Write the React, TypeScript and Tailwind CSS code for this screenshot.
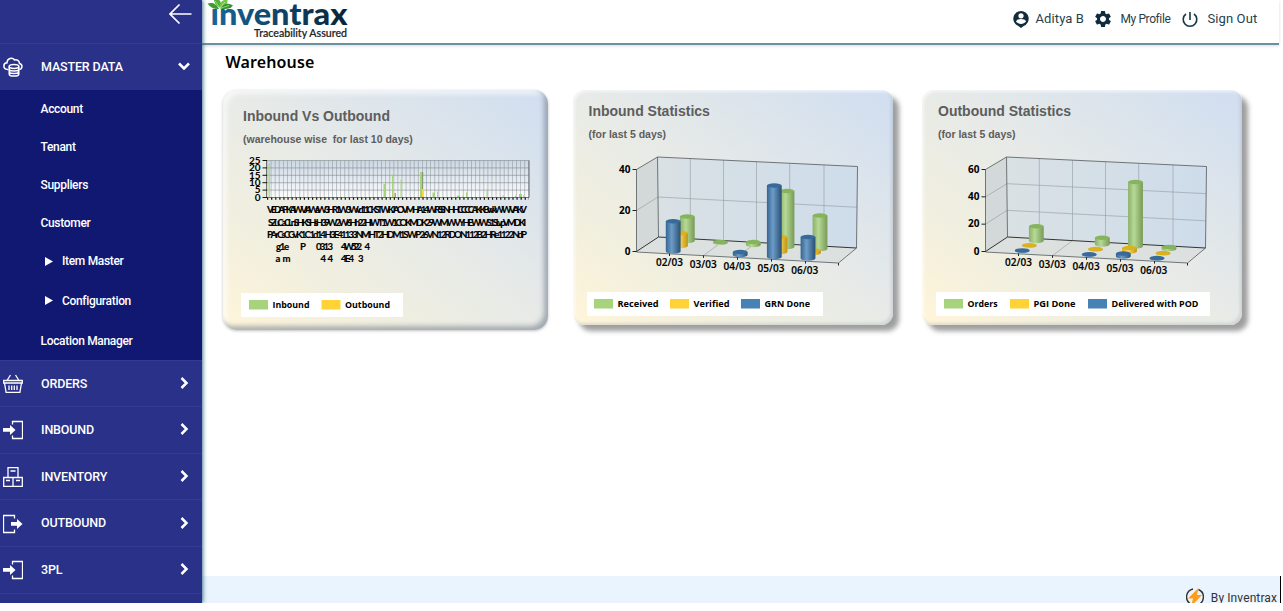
import React from "react";
import { MdSettings } from "react-icons/md";

const CHART_FONT = '"Open Sans", "Noto Sans", sans-serif';
const TICK_FONT = '"Lato", "Open Sans", sans-serif';

function BasketIcon() {
  return (
    <svg width="20" height="20" viewBox="0 0 20 20" fill="none" stroke="#fff" strokeWidth="1.3">
      <path d="M.7 6.500h18.600v2.500H.7zM1.500 9l1.600 9.300h13.800l1.600-9.300M4 6.500l3.500-5.500M16 6.500l-3.500-5.500M6 11.500v4.500M8.700 11.500v4.500M11.300 11.500v4.500M14 11.500v4.500" />
    </svg>
  );
}
function InIcon() {
  return (
    <svg width="20" height="20" viewBox="0 0 20 20" fill="none" stroke="#fff" strokeWidth="1.3">
      <path d="M9.500 4.500v-3h10v17h-10v-3" />
      <path d="M0 8h7V5l5.500 5L7 15v-3.200H0z" fill="#fff" stroke="none" />
    </svg>
  );
}
function OutIcon() {
  return (
    <svg width="20" height="20" viewBox="0 0 20 20" fill="none" stroke="#fff" strokeWidth="1.3">
      <path d="M11.500 4.500v-3h-11v17h11v-3" />
      <path d="M8 8h6V5l5.500 5L14 15v-3.200H8z" fill="#fff" stroke="none" />
    </svg>
  );
}
function BoxesIcon() {
  return (
    <svg width="20" height="20" viewBox="0 0 20 20" fill="none" stroke="#fff" strokeWidth="1.3">
      <path d="M.7 10.500h18.600v8.800H.7zM10 10.500v9M5 10.500v-9.800h10v9.800M7.500 4h5M3 13.500h4M13 13.500h4" />
    </svg>
  );
}
function CloudIcon() {
  return (
    <svg width="20" height="20" viewBox="0 0 20 20" fill="none" stroke="#fff" strokeWidth="1.5">
      <path d="M5.500 12.500H4.500C-.5 12 0 6 4 5.800 4 1 9.500 0 11.500 3c3-.8 5 1.200 5 3.500 3.500 1 3 5.500-.2 6" />
      <ellipse cx="11" cy="9.500" rx="4.800" ry="1.900" />
      <path d="M6.200 9.500V17c0 2.800 9.600 2.800 9.600 0V9.500M6.200 12c0 2.600 9.600 2.600 9.600 0M6.200 14.600c0 2.600 9.600 2.600 9.600 0" />
    </svg>
  );
}

function MenuRow({ icon, label, open }: { icon: React.ReactNode; label: string; open?: boolean }) {
  return (
    <div className="flex h-[46.600px] shrink-0 items-center border-t border-[#343b94] pl-[2.500px] pr-[10.500px] pt-px">
      <span className="w-[38.500px]">{icon}</span>
      <span className="flex-1 text-[12.500px] font-medium tracking-[-0.15px] text-white">{label}</span>
      <svg className="mb-[2px]" width="14" height="14" viewBox="0 0 14 14" fill="none" stroke="#fff" strokeWidth="2.500">
        <path d={open ? "M2 4.500l5 5 5-5" : "M4.500 2l5 5-5 5"} />
      </svg>
    </div>
  );
}

function SubItem({ label, arrow, tall }: { label: string; arrow?: boolean; tall?: boolean }) {
  return (
    <div className={`flex items-center text-[12px] font-medium tracking-[-0.32px] text-white ${tall ? "h-[40px] pt-[2.500px]" : "h-[38px] pt-px"} ${arrow ? "pl-[45px]" : "pl-[40.500px]"}`}>
      {arrow && (
        <svg className="mr-[9px]" width="8" height="9" viewBox="0 0 8 9">
          <path d="M0 0l8 4.500L0 9z" fill="#fff" />
        </svg>
      )}
      {label}
    </div>
  );
}

function Legend({ items, widths }: { items: [string, string, number, number][]; widths: number }) {
  return (
    <svg className="block" width={widths} height="24" fontFamily={CHART_FONT} fontSize="9.500" fontWeight="700">
      <rect width={widths} height="24" fill="#fff" />
      {items.map(([label, color, x, w]) => (
        <g key={label}>
          <rect x={x} y="7" width="19" height="9.500" fill={color} />
          <text x={x + 23.500} y="14.500" textLength={w} lengthAdjust="spacingAndGlyphs">{label}</text>
        </g>
      ))}
    </svg>
  );
}

const G = "#a6d37b";
const Y = "#ffd335";
const B = "#4682b4";

type Cyl = ["g" | "y" | "b", number, number, number];

const topColor = { g: "#86b45c", y: "#dbb11f", b: "#386b9b" };

function Cylinders({ items, id }: { items: Cyl[]; id: string }) {
  return (
    <>
      {items.map(([c, x, t, b], i) => {
        const rx = 7.4;
        return (
          <g key={i}>
            <path d={`M${x - rx} ${t}V${b}A${rx} 2.200 0 0 0 ${x + rx} ${b}V${t}z`} fill={`url(#${id}${c})`} />
            <ellipse cx={x} cy={t} rx={rx} ry="2.200" fill={topColor[c]} />
          </g>
        );
      })}
    </>
  );
}

function Chart3D({ id, ticks, bars }: { id: string; ticks: number[]; bars: Cyl[] }) {
  const n = ticks.length - 1;
  const grads: [string, string, string, string][] = [
    ["g", "#8bb168", "#b7d996", "#779a55"],
    ["y", "#d9ac20", "#ffdb58", "#bd9418"],
    ["b", "#34648f", "#6c9cc8", "#294f74"],
  ];
  return (
    <svg className="block" width="320" height="136" viewBox="573 147 320 136" fontFamily={CHART_FONT} fontSize="10" fontWeight="600">
      <defs>
        {grads.map(([k, a, b, c]) => (
          <linearGradient id={id + k} key={k}>
            <stop offset="0" stopColor={a} />
            <stop offset=".4" stopColor={b} />
            <stop offset="1" stopColor={c} />
          </linearGradient>
        ))}
        <linearGradient id={id + "w"}>
          <stop offset="0" stopColor="#d9e1e4" />
          <stop offset="1" stopColor="#cedceb" />
        </linearGradient>
      </defs>
      <path d="M636.500 169.500L657.500 157l1 80-22 14.500z" fill="#d3d9d9" />
      <path d="M657.500 157l200 9.500-1 81.500-198-11z" fill={`url(#${id}w)`} />
      <path d="M636.500 251.500l22-14.500 198 11-18 15z" fill="#dce1e0" />
      <g fill="none" stroke="#777f84" strokeWidth=".6" opacity=".7">
        {[690.3, 723.5, 756.5, 789.7, 824].map((x) => (
          <path key={x} d={`M${x} ${157 + (x - 657.5) * 0.0475}V${237 + (x - 658) * 0.055}`} />
        ))}
        <path d="M723.500 240.600l-20 15M756.500 242.500l-20 15" />
        {ticks.slice(1, -1).map((t, i) => {
          const f = (i + 1) / n;
          return <path key={t} d={`M636.500 ${251.5 - 82 * f}L658 ${237 - 80 * f}L857 ${248 - 81.500 * f}`} />;
        })}
      </g>
      <path d="M636.500 169.500L657.500 157l200 9.500-1 81.500-18 15-202-11zM657.500 157l1 80" fill="none" stroke="#62686b" strokeWidth=".9" />
      <path d="M636.500 251.500l22-14.500 198 11" fill="none" stroke="#333" strokeWidth="1" />
      <Cylinders items={bars} id={id} />
      {ticks.map((t, i) => {
        const y = 251.5 - (82 * i) / n;
        return (
          <g key={t}>
            <path d={`M632.500 ${y}h4`} stroke="#222" />
            <text x="630.500" y={y + 3.300} textAnchor="end" fontWeight="700">{t}</text>
          </g>
        );
      })}
      {["02/03", "03/03", "04/03", "05/03", "06/03"].map((d, i) => (
        <g key={d}>
          <path d={`M${669.5 + i * 34} ${253.500 + i * 1.900}v2.500`} stroke="#222" />
          <text x={656 + i * 33.800} y={266 + i * 1.950} textLength="27" stroke="#000" strokeWidth=".15">{d}</text>
        </g>
      ))}
      <path d="M838.500 263v2.500" stroke="#222" />
    </svg>
  );
}

const rows: [number, number, number, string][] = [
  [213, 267, 260, "VEDAPKAi WVJ4WaW3HR1W3Wvd11CKSTWKJAOVMHA14WRSSNHHCCCCAKKBvvkWWVAKV"],
  [225.5, 268, 258, "SZuCaCLnSHKSHsH39W2W6Hh22HIWT1W1COKMDK29WMWVYHEWWS1SLvpVMDKI"],
  [237.5, 267, 260, "PArCsCGvK1C 1d14 H3E41133NMHT2HDM1S WP26VN12RDON112B2HRe1122NdP"],
  [250, 276, 13, "g1e"],
  [250, 300, 5, "P"],
  [250, 316, 17, "0313"],
  [250, 341, 21, "4W522"],
  [250, 364.5, 5, "4"],
  [262, 275.5, 15, "a m"],
  [262, 320.5, 12.5, "4 4"],
  [262, 341, 13, "4E4"],
  [262, 358, 5, "3"],
];

const thinBars: [number, number, number, string][] = [
  [268.5, 1.2, 34, G], [383.5, 2.6, 13.5, G], [392, 1, 23, G], [392.8, 1.5, 5, Y], [394.5, 1.500, 4.5, "#94aa8f"],
  [400.5, 1, 18, G], [420, 2.7, 25.5, G], [422, 1.800, 8, Y], [432.5, 2.5, 5, G], [437, 1, 6, G],
  [457, 3, 2, G], [462.500, 1, 2, G], [466, 1, 5, G], [486.500, 1.2, 8, G], [502.500, 1.2, 2, G], [515, 1, 2, G], [519, 3, 3.5, G], [523, 1, 2, G],
];

function FlatChart() {
  return (
    <svg className="block" width="325" height="140" viewBox="223 149 325 140" fontFamily={TICK_FONT} fontSize="10" fontWeight="800">
      <defs>
        <linearGradient id="plot" x1="0" y1="0" x2="0" y2="1">
          <stop offset="0" stopColor="#cbd7e3" />
          <stop offset="1" stopColor="#fdfdfd" />
        </linearGradient>
      </defs>
      <rect x="267" y="160.500" width="262" height="37" fill="url(#plot)" />
      <g stroke="#7d8589" strokeWidth=".7">
        {Array.from({ length: 65 }, (_, i) => (
          <path key={i} d={`M${267 + i * 4.090} 160.500v37`} opacity=".65" />
        ))}
        {[0, 1, 2, 3, 4].map((i) => (
          <path key={i} d={`M267 ${160.500 + i * 7.400}h262`} opacity=".8" />
        ))}
      </g>
      {thinBars.map(([x, w, h, c]) => (
        <rect key={x} x={x} y={197.500 - h} width={w} height={h} fill={c} />
      ))}
      <path d="M422.700 172v17" stroke="#737c71" strokeWidth=".8" />
      <path d="M266.500 160.500v37h262.500M529 160.500v37" fill="none" stroke="#555" strokeWidth=".8" />
      <path d="M267 198.700h262" stroke="#111" strokeWidth="2.200" strokeDasharray="1.200 2.890" />
      {[25, 20, 15, 10, 5, 0].map((v, i) => (
        <g key={v}>
          <path d={`M262.500 ${160.500 + i * 7.400}h4.500`} stroke="#111" />
          <text x="260.500" y={163.800 + i * 7.400} textAnchor="end" fontWeight="700">{v}</text>
        </g>
      ))}
      {rows.map(([y, x, w, t], i) => (
        <text key={i} x={x} y={y} textLength={w} fontSize="9.600" fontWeight="700" stroke="#000" strokeWidth=".15">{t}</text>
      ))}
    </svg>
  );
}

function CardHead({ title, sub, wide }: { title: string; sub: string; wide: string }) {
  return (
    <div className={`whitespace-pre font-bold text-[#5d5d5d] ${wide}`}>
      <div className="h-[24px] text-[14px] leading-[20px]">{title}</div>
      <div className="text-[10.500px] leading-[18px]">{sub}</div>
    </div>
  );
}

const CARD =
  "flex flex-col h-[235px] w-[320px] rounded-[12px] bg-[linear-gradient(to_top_right,#fff5d9_0%,#f1efdf_25%,#e7eae7_52%,#d2dff0_96%)] shadow-[6px_6px_5px_rgba(0,0,0,0.38),inset_-2px_-2px_3px_rgba(110,125,140,0.2),inset_2px_2px_3px_rgba(255,255,255,0.6)]";

function Logo() {
  return (
    <svg className="block" width="150" height="43" viewBox="202 0 150 43">
      <defs>
        <linearGradient id="brand">
          <stop offset="0" stopColor="#17679a" />
          <stop offset=".3" stopColor="#10527c" />
          <stop offset="1" stopColor="#082437" />
        </linearGradient>
      </defs>
      <text x="210.500" y="25" fontFamily='"Lato", sans-serif' fontSize="31" fontWeight="900" textLength="137" lengthAdjust="spacingAndGlyphs" fill="url(#brand)">inventrax</text>
      <path d="M208 0h25v7h-25z" fill="#fff" />
      <path d="M219 9C216 3 212 2 207.500 3.500c3 4 7 6 11.500 5.500z" fill="#3d9b35" />
      <path d="M220 8c-5-3-6-6-6-9h4c3 2 4 5 2 9z" fill="#51af3b" />
      <path d="M220 8c-1-5 2-8 7-9 2 4-2 8-7 9z" fill="#73c845" />
      <path d="M220 8.500c3-5 8-6 13-3-3 4-8 4-13 3z" fill="#37952f" />
      <path d="M220 8l-5-7M220 8l5-6M220 8.300l9-2.800" stroke="#d3eeb5" strokeWidth=".6" />
      <text x="254" y="37" fontFamily='"Lato", sans-serif' fontSize="10.500" fontWeight="500" textLength="93" lengthAdjust="spacingAndGlyphs" fill="#222" stroke="#222" strokeWidth=".2">Traceability Assured</text>
    </svg>
  );
}

export default function App() {
  return (
    <div className="h-[611px] w-[1283px] overflow-hidden bg-white font-['Roboto',sans-serif]">
      <div className="flex h-[603px] overflow-hidden">
        <aside className="z-10 mr-[0.500px] flex w-[201.500px] shrink-0 flex-col overflow-hidden bg-[#293189] shadow-[1px_0_4px_rgba(50,105,130,0.9)]">
          <div className="flex h-[43px] shrink-0 justify-end pr-[10px] pt-[3px]">
            <svg width="23" height="22" viewBox="0 0 23 22" fill="none" stroke="#fff" strokeWidth="1.700">
              <path d="M22.500 11H1.500M10.500 1.500L1 11l9.500 9.500" />
            </svg>
          </div>
          <MenuRow icon={<CloudIcon />} label="MASTER DATA" open />
          <div className="h-[270px] shrink-0 bg-[#101872]">
            <SubItem label="Account" />
            <SubItem label="Tenant" />
            <SubItem label="Suppliers" />
            <SubItem label="Customer" />
            <SubItem label="Item Master" arrow />
            <SubItem label="Configuration" arrow tall />
            <SubItem label="Location Manager" tall />
          </div>
          <MenuRow icon={<BasketIcon />} label="ORDERS" />
          <MenuRow icon={<InIcon />} label="INBOUND" />
          <MenuRow icon={<BoxesIcon />} label="INVENTORY" />
          <MenuRow icon={<OutIcon />} label="OUTBOUND" />
          <MenuRow icon={<InIcon />} label="3PL" />
          <div className="h-[12px] shrink-0 border-t border-[#343b94]" />
        </aside>

        <div className="flex w-[1081px] flex-col">
          <header className="flex h-[45px] w-[1077px] shrink-0 items-start justify-between border-b-2 border-[#6b919f] shadow-[0_1px_3px_rgba(0,0,0,0.15)]">
            <Logo />
            <div className="flex h-[38px] items-center pr-[21.500px] text-[#263f4d]">
              <svg width="16" height="17" viewBox="0 0 16 17">
                <path d="M8 0a7.700 7.700 0 0 1 2.700 14.900L8 17l-2.700-2.100A7.700 7.700 0 0 1 8 0z" fill="#102c3d" />
                <circle cx="8" cy="4.800" r="2.600" fill="#fff" />
                <path d="M3 10.500c1-3.200 9-3.200 10 0-2.500 3.200-7.500 3.200-10 0z" fill="#fff" />
              </svg>
              <span className="ml-[7px] w-[57px] whitespace-nowrap text-[13px] tracking-[0.1px]">Aditya B</span>
              <MdSettings className="text-[#102c3d]" size={20} />
              <span className="ml-[8px] w-[61px] whitespace-nowrap text-[12px] tracking-[-0.4px]">My Profile</span>
              <svg width="16" height="17" viewBox="0 0 16 17" fill="none" stroke="#173749" strokeWidth="1.600">
                <path d="M8 1v8M4 3a6.800 6.800 0 1 0 8 0" />
              </svg>
              <span className="ml-[10px] w-[50px] whitespace-nowrap text-[13px] tracking-[0.1px]">Sign Out</span>
            </div>
          </header>

          <main className="flex-1 pl-[21px]">
            <h1 className="h-[45px] pl-[2.500px] pt-[6px] font-['Noto_Sans',sans-serif] text-[16px] font-semibold leading-[22px] tracking-[0.12px] text-black">Warehouse</h1>
            <div className="flex items-start font-['Liberation_Sans',sans-serif]">
              <section className="flex h-[240px] w-[325px] flex-col rounded-[14px] bg-[linear-gradient(to_top_right,#fff5d9_0%,#f1efdf_25%,#e7eae7_52%,#d2dff0_96%)] shadow-[0_1px_3px_rgba(0,0,0,0.25),inset_-4px_-4px_5px_rgba(95,110,130,0.5),inset_4px_4px_5px_rgba(255,255,255,0.65)]">
                <CardHead title="Inbound Vs Outbound" sub="(warehouse wise  for last 10 days)" wide="h-[59px] pl-[20px] pt-[16px]" />
                <FlatChart />
                <div className="pl-[18px] pt-[4px]">
                  <Legend widths={162} items={[["Inbound", G, 8, 37], ["Outbound", Y, 80.500, 45]]} />
                </div>
              </section>
              <section className={`${CARD} ml-[25px]`}>
                <CardHead title="Inbound Statistics" sub="(for last 5 days)" wide="h-[57px] pl-[15.500px] pt-[11px]" />
                <Chart3D
                  id="inb"
                  ticks={[0, 20, 40]}
                  bars={[
                    ["g", 687.3, 216.500, 241], ["g", 720.3, 242, 242.800], ["g", 753.3, 242, 245], ["g", 787, 191, 247], ["g", 820, 215.500, 249],
                    ["y", 680.5, 233, 246], ["y", 780, 237, 252], ["y", 813.500, 250.500, 253],
                    ["b", 673.2, 221.200, 251.500], ["b", 740.2, 252, 255], ["b", 774.3, 185.500, 257], ["b", 808, 237, 258.500],
                  ]}
                />
                <div className="pl-[14px] pt-[9px]">
                  <Legend widths={236} items={[["Received", G, 7, 41], ["Verified", Y, 83, 36], ["GRN Done", B, 154, 45.500]]} />
                </div>
              </section>
              <section className={`${CARD} ml-[29px]`}>
                <CardHead title="Outbound Statistics" sub="(for last 5 days)" wide="h-[57px] pl-[16px] pt-[11px]" />
                <Chart3D
                  id="out"
                  ticks={[0, 20, 40, 60]}
                  bars={[
                    ["g", 687.3, 226.300, 241], ["g", 753.3, 237.800, 244.500], ["g", 786.5, 182, 246.500], ["g", 820, 247, 249],
                    ["y", 680.3, 245.300, 245.700], ["y", 746.500, 249, 249.500], ["y", 780.500, 248, 251.500], ["y", 814, 253, 253.500],
                    ["b", 673.2, 250.400, 250.800], ["b", 740.2, 254.200, 254.700], ["b", 774.3, 253.500, 256.500], ["b", 808, 258, 258.500],
                  ]}
                />
                <div className="pl-[14px] pt-[9px]">
                  <Legend widths={274} items={[["Orders", G, 8, 30], ["PGI Done", Y, 74, 42], ["Delivered with POD", B, 152, 87]]} />
                </div>
              </section>
            </div>
          </main>

          <footer className="flex h-[27px] w-[1079px] shrink-0 items-start justify-end border-r border-black bg-[#e9f4ff] pr-[3px] pt-[12px]">
            <svg width="18" height="18" viewBox="0 0 18 18">
              <path d="M7 1A8.200 8.200 0 0 0 4.500 16M12.500 1.500A8.200 8.200 0 0 1 11 17" fill="none" stroke="#333" strokeWidth="1.400" />
              <path d="M12.500 0L2 10.500h5l-2 8L16 7h-5z" fill="#ff9d16" />
            </svg>
            <span className="ml-[7px] whitespace-nowrap text-[12px] leading-[20px] tracking-[0.1px] text-[#333]">By Inventrax</span>
          </footer>
        </div>
      </div>
    </div>
  );
}
